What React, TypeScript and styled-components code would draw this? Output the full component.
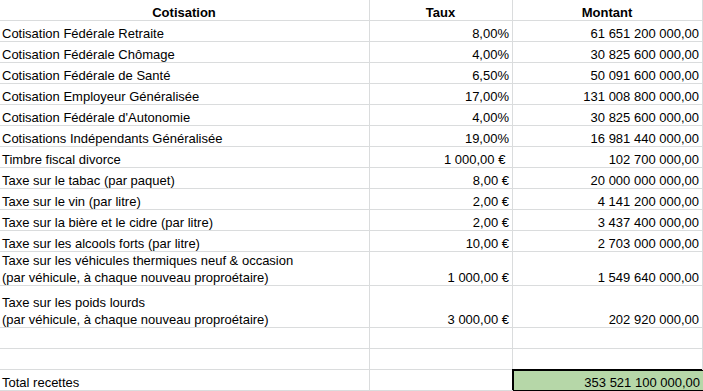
import React from "react";
import styled, { createGlobalStyle } from "styled-components";

const GlobalStyle = createGlobalStyle`
  html, body {
    margin: 0;
    padding: 0;
    background: #ffffff;
  }
  body {
    font-family: "Liberation Sans", Arial, sans-serif;
    font-size: 13px;
    color: #000000;
  }
`;

type Line = {
  label: string[];
  taux?: string;
  montant?: string;
  height?: number;
};

const LINES: Line[] = [
  { label: ["Cotisation Fédérale Retraite"], taux: "8,00%", montant: "61 651 200 000,00" },
  { label: ["Cotisation Fédérale Chômage"], taux: "4,00%", montant: "30 825 600 000,00" },
  { label: ["Cotisation Fédérale de Santé"], taux: "6,50%", montant: "50 091 600 000,00" },
  { label: ["Cotisation Employeur Généralisée"], taux: "17,00%", montant: "131 008 800 000,00" },
  { label: ["Cotisation Fédérale d'Autonomie"], taux: "4,00%", montant: "30 825 600 000,00" },
  { label: ["Cotisations Indépendants Généralisée"], taux: "19,00%", montant: "16 981 440 000,00" },
  { label: ["Timbre fiscal divorce"], taux: "1 000,00 €\u00a0", montant: "102 700 000,00" },
  { label: ["Taxe sur le tabac (par paquet)"], taux: "8,00 €", montant: "20 000 000 000,00" },
  { label: ["Taxe sur le vin (par litre)"], taux: "2,00 €", montant: "4 141 200 000,00" },
  { label: ["Taxe sur la bière et le cidre (par litre)"], taux: "2,00 €", montant: "3 437 400 000,00" },
  { label: ["Taxe sur les alcools forts (par litre)"], taux: "10,00 €", montant: "2 703 000 000,00" },
  {
    label: [
      "Taxe sur les véhicules thermiques neuf & occasion",
      "(par véhicule, à chaque nouveau proproétaire)",
    ],
    taux: "1 000,00 €",
    montant: "1 549 640 000,00",
    height: 34,
  },
  {
    label: ["Taxe sur les poids lourds", "(par véhicule, à chaque nouveau proproétaire)"],
    taux: "3 000,00 €",
    montant: "202 920 000,00",
    height: 42,
  },
  { label: [] },
  { label: [] },
];

const Sheet = styled.div`
  display: flex;
  flex-direction: column;
  width: 703px;
  overflow: hidden;
`;

const Row = styled.div<{ $h: number }>`
  display: grid;
  grid-template-columns: 370px 143px 1fr;
  height: ${({ $h }) => $h}px;
`;

const Cell = styled.div<{ $align?: "left" | "center" | "right"; $bold?: boolean }>`
  box-sizing: border-box;
  display: flex;
  flex-direction: column;
  justify-content: flex-end;
  align-items: ${({ $align }) =>
    $align === "right" ? "flex-end" : $align === "center" ? "center" : "flex-start"};
  padding: 0 3px 0 2px;
  border-right: 1px solid #dadcdd;
  border-bottom: 1px solid #dadcdd;
  font-weight: ${({ $bold }) => ($bold ? "bold" : "normal")};
  line-height: 17px;
  white-space: pre;
`;

const TotalCell = styled(Cell)`
  background: #b6d7a8;
  border-right: none;
  border-bottom: 1px solid #000000;
  box-shadow: -1px -1px 0 0 #000000, inset 1px 1px 0 0 #000000;
`;

const Text = styled.span`
  display: block;
  &:last-child {
    margin-bottom: -1px;
  }
`;

export default function App() {
  return (
    <>
      <GlobalStyle />
      <Sheet>
        <Row $h={21}>
          <Cell $align="center" $bold><Text>Cotisation</Text></Cell>
          <Cell $align="center" $bold><Text>Taux</Text></Cell>
          <Cell $align="center" $bold><Text>Montant</Text></Cell>
        </Row>
        {LINES.map((line, i) => (
          <Row key={i} $h={line.height ?? 21}>
            <Cell>
              {line.label.map((t) => (
                <Text key={t}>{t}</Text>
              ))}
            </Cell>
            <Cell $align="right">{line.taux && <Text>{line.taux}</Text>}</Cell>
            <Cell $align="right">{line.montant && <Text>{line.montant}</Text>}</Cell>
          </Row>
        ))}
        <Row $h={21}>
          <Cell><Text>Total recettes</Text></Cell>
          <Cell />
          <TotalCell $align="right"><Text>353 521 100 000,00</Text></TotalCell>
        </Row>
      </Sheet>
    </>
  );
}
